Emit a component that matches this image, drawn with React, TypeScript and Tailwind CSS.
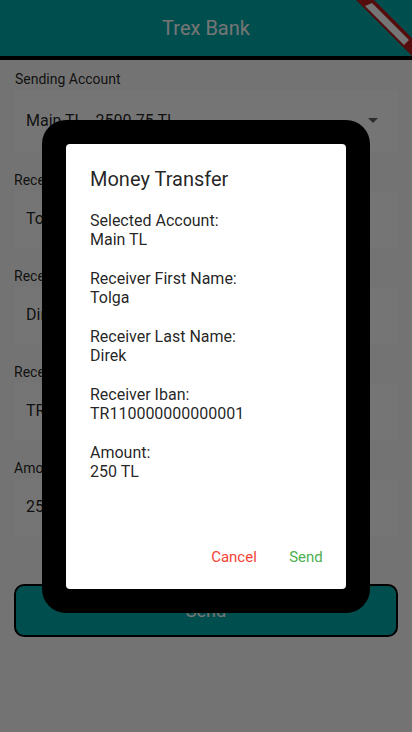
import React from "react";

const fields = [
  { label: "Receiver First Name", value: "Tolga" },
  { label: "Receiver Last Name", value: "Direk" },
  { label: "Receiver Iban", value: "TR110000000000001" },
  { label: "Amount", value: "250" },
];

const summary = [
  { label: "Selected Account:", value: "Main TL" },
  { label: "Receiver First Name:", value: "Tolga" },
  { label: "Receiver Last Name:", value: "Direk" },
  { label: "Receiver Iban:", value: "TR110000000000001" },
  { label: "Amount:", value: "250 TL" },
];

const DebugBanner: React.FC = () => (
  <svg
    className="absolute right-0 top-0"
    width="60"
    height="56"
    viewBox="0 0 60 56"
  >
    <polygon points="4,0 22,0 60,38 60,56" fill="#b71c1c" />
    <polygon points="13,6 20,3 57,40 52,45" fill="#ffffff" />
  </svg>
);

const Field: React.FC<{ label: string; value: string }> = ({
  label,
  value,
}) => (
  <div className="mt-[21px]">
    <div className="h-4 text-[14px] leading-4 text-black/[0.87]">{label}</div>
    <div className="mt-[3px] flex h-[56px] items-center bg-white px-3 text-[16px] text-black/[0.87]">
      {value}
    </div>
  </div>
);

const Page: React.FC = () => (
  <div className="flex h-full flex-col bg-[#fafafa]">
    <div className="relative flex h-14 items-center justify-center bg-[#00abab] text-[20px] text-white">
      Trex Bank
      <DebugBanner />
    </div>
    <div className="h-1 bg-black" />
    <div className="px-[14px] pt-[11px]">
      <div className="h-4 pl-px text-[14px] leading-4 text-black/[0.87]">
        Sending Account
      </div>
      <div className="mt-[3px] flex h-[61px] items-center justify-between bg-white pl-3 pr-5 text-[16px] text-black/[0.87]">
        <span>Main TL - 2500.75 TL</span>
        <svg width="10" height="5" viewBox="0 0 10 5">
          <polygon points="0,0 10,0 5,5" fill="#616161" />
        </svg>
      </div>
      {fields.map((f) => (
        <Field key={f.label} label={f.label} value={f.value} />
      ))}
      <button className="mt-[49px] h-[53px] w-full rounded-[10px] border-2 border-black bg-[#00abab] text-[18px] text-white">
        Send
      </button>
    </div>
  </div>
);

const TransferDialog: React.FC = () => (
  <div className="w-[328px] rounded-[24px] bg-black p-6">
    <div className="flex h-[445px] flex-col rounded-[4px] bg-white">
      <div className="px-6 pt-6 text-[20px] leading-[23px] text-black/[0.87]">
        Money Transfer
      </div>
      <div className="flex flex-col gap-5 px-6 pt-5 text-[16px] leading-[19px] text-black/[0.87]">
        {summary.map((s) => (
          <div key={s.label}>
            <div>{s.label}</div>
            <div>{s.value}</div>
          </div>
        ))}
      </div>
      <div className="mt-auto flex justify-end gap-2 pb-[13px] pr-2">
        <button className="h-9 min-w-16 px-2 text-[15px] text-[#f44336]">
          Cancel
        </button>
        <button className="h-9 min-w-16 px-2 text-[15px] text-[#4caf50]">
          Send
        </button>
      </div>
    </div>
  </div>
);

export default function App() {
  return (
    <div
      className="relative h-[732px] w-[412px] overflow-hidden"
      style={{ fontFamily: "Roboto, 'Liberation Sans', sans-serif" }}
    >
      <Page />
      <div className="absolute inset-0 flex items-center justify-center bg-black/[0.54]">
        <TransferDialog />
      </div>
    </div>
  );
}
